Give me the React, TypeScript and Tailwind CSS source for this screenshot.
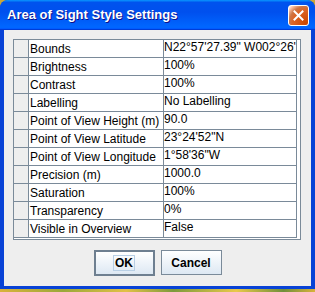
import React from "react";

const rows: [string, string][] = [
  ["Bounds", "N22°57'27.39\" W002°26'"],
  ["Brightness", "100%"],
  ["Contrast", "100%"],
  ["Labelling", "No Labelling"],
  ["Point of View Height (m)", "90.0"],
  ["Point of View Latitude", "23°24'52\"N"],
  ["Point of View Longitude", "1°58'36\"W"],
  ["Precision (m)", "1000.0"],
  ["Saturation", "100%"],
  ["Transparency", "0%"],
  ["Visible in Overview", "False"],
];

export default function App() {
  return (
    <div className="w-[315px] h-[292px] flex flex-col bg-[#c9a63a] overflow-hidden" style={{ fontFamily: "'Liberation Sans', Arial, sans-serif" }}>
      <div className="h-[289px] flex flex-col rounded-t-[8px] overflow-hidden bg-[#0842d6]">
        {/* Title bar */}
        <div className="h-[30px] shrink-0 flex items-center justify-between pl-[7px] pr-[6px] bg-[linear-gradient(180deg,#0997ff,#0053ee_8%,#0050ee_40%,#0066ff_88%,#0066ff_93%,#005bff_95%,#003dd7_96%,#003dd7)]">
          <span className="text-white font-bold text-[13px] [text-shadow:1px_1px_#0f1089]">
            Area of Sight Style Settings
          </span>
          <div className="w-[21px] h-[21px] rounded-[3px] border border-white flex items-center justify-center bg-[radial-gradient(circle_at_90%_90%,#cc4600_0%,#dc6527_55%,#cd7546_70%,#ffccb2_90%,#fff_100%)]">
            <svg width="11" height="11" viewBox="0 0 11 11">
              <path d="M1.5 1.5 L9.5 9.5 M9.5 1.5 L1.5 9.5" stroke="white" strokeWidth="2" strokeLinecap="square" />
            </svg>
          </div>
        </div>
        {/* Body */}
        <div className="flex-1 flex flex-col mx-[4px] mb-[3px] bg-[#eeeeee] pt-[9px] pl-[9px] pr-[10px]">
          <div className="w-[288px] h-[201px] border border-[#7a8a99] bg-white flex flex-col">
            {rows.map(([k, v]) => (
              <div key={k} className="flex h-[18px] shrink-0 text-[12px] leading-[14px] text-black">
                <div className="w-[15px] h-full bg-[#eeeeee] border-r border-b border-[#7a8a99]" />
                <div className="w-[135px] h-full border-r border-b border-[#7a8a99] pl-[1px] pt-[2px] whitespace-nowrap overflow-hidden">{k}</div>
                <div className="w-[133px] h-full border-r border-b border-[#7a8a99] whitespace-nowrap overflow-hidden pt-0">{v}</div>
              </div>
            ))}
          </div>
          <div className="flex justify-center gap-[6px] mt-[10px] ml-[1px]">
            <button className="w-[61px] h-[26px] border-2 border-[#6e7f90] bg-[linear-gradient(180deg,#ffffff,#dde8f3)] flex items-center justify-center">
              <span className="text-[12px] font-bold leading-[14px] px-[1px] border border-[#b8cfe5] text-black">OK</span>
            </button>
            <button className="w-[61px] h-[25px] border border-[#7a8a99] bg-[linear-gradient(180deg,#ffffff,#dde8f3)] flex items-center justify-center">
              <span className="text-[12px] font-bold text-black">Cancel</span>
            </button>
          </div>
        </div>
      </div>
      <div className="h-[3px] bg-[linear-gradient(90deg,#d9b23a,#9aa83a_20%,#e2c046_40%,#7c9a3c_55%,#e9c84a_75%,#6f8f3a_90%,#d9b23a)]" />
    </div>
  );
}
